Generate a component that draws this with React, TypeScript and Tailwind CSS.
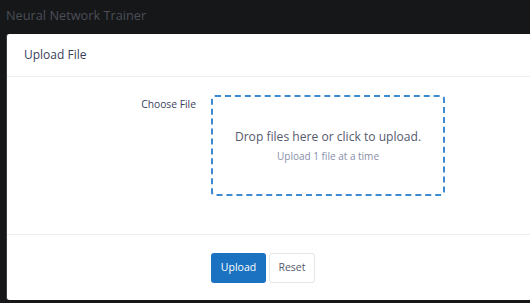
export default function App() {
  return (
    <div className="h-[303px] w-[530px] overflow-hidden bg-[#161719] pl-[6px] font-['Open_Sans',sans-serif]">
      <div className="flex h-[34px] items-center pb-[2px] text-[12.75px] text-[#4b4e58]">Neural Network Trainer</div>
      <div className="flex h-[266px] flex-col rounded-tl-[3px] rounded-bl-[3px] border-l border-[#3a3b3e] bg-white">
        <div className="flex h-[43px] items-center border-b border-[#eeeeee] px-[17px] text-[12px] font-medium text-[#3b3f5c]">
          Upload File
        </div>
        <div className="flex h-[158px] border-b border-[#eeeeee] pt-[18px]">
          <div className="w-[204px] pt-[2px] pr-[15px] text-right text-[10.3px] text-[#3b3f5c]">Choose File</div>
          <div className="flex h-[101px] w-[234px] flex-col items-center justify-center rounded-[4px] border-2 border-dashed border-[#3b8ad2]">
            <div className="mt-[1px] text-[12.1px] font-medium text-[#555a6e]">Drop files here or click to upload.</div>
            <div className="mt-[2px] text-[10px] text-[#888ea8]">Upload 1 file at a time</div>
          </div>
        </div>
        <div className="flex gap-[3px] pl-[204px] pt-[18px]">
          <button className="h-[30px] w-[55px] rounded-[3px] bg-[#1b72c0] text-[10.5px] font-medium text-white">Upload</button>
          <button className="h-[30px] w-[46px] rounded-[3px] border border-[#e5e5e5] bg-white text-[10.5px] text-[#555a6e]">Reset</button>
        </div>
      </div>
    </div>
  );
}
